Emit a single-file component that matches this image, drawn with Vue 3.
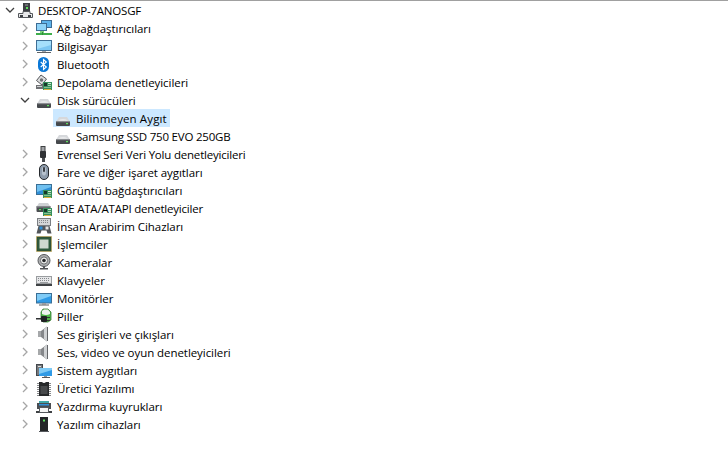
<script setup>
const disk = '<path d="M1.5 11 L4 7 H12 L14.5 11Z" fill="#d6d8db"/><path d="M3 10.5 Q8 8 13 10.5Z" fill="#eff0f1"/><rect x="1" y="11" width="14" height="5" rx="1" fill="#45484c"/><rect x="1" y="11" width="14" height="1.2" fill="#8a8d91"/><rect x="11" y="13" width="2" height="1.2" fill="#5ee05e"/>'
const board = '<rect x="7" y="8" width="9" height="8" fill="#37905c"/><rect x="8" y="9" width="3" height="3" fill="#17382a"/><rect x="12" y="9" width="3" height="1" fill="#cfe6d3"/><rect x="12" y="11" width="3" height="1" fill="#a9d2b0"/><rect x="8" y="13" width="7" height="1" fill="#86c091"/><rect x="8" y="15" width="7" height="1" fill="#d9b23c"/>'
const speaker = '<rect x="2" y="5" width="3" height="6" fill="#a6a8aa"/><path d="M5 5 L11 0.5 V15.5 L5 11Z" fill="#85878a"/><path d="M8 3 L11 0.5 V15.5 L8 13Z" fill="#cfd1d3"/><rect x="11" y="1" width="1" height="14" fill="#636568"/>'

const icons = {
  root: '<rect x="5" y="1" width="7" height="8" fill="#3c3f43"/><rect x="7" y="2.5" width="3" height="1" fill="#9a9da0"/><rect x="8" y="5" width="2" height="2" fill="#5ee05e"/><path d="M0.5 11.5 H5 V9.5 H12 V11.5 H14.5 V15.5 H0.5Z" fill="#e8e9ea" stroke="#55585c"/><rect x="2" y="13" width="3" height="2" fill="#3c3f43"/><rect x="10" y="13" width="3" height="2" fill="#3c3f43"/>',
  network: '<rect x="5.5" y="0.5" width="10" height="7" fill="#5fb4ec" stroke="#3d6c94"/><rect x="0.5" y="3.5" width="10" height="7" fill="#8fd3f8" stroke="#3d6c94"/><rect x="4" y="11" width="4" height="2" fill="#7bd07b"/><rect x="0" y="13" width="16" height="2" fill="#3fae4b"/><rect x="6" y="12" width="1" height="3" fill="#2f8a3a"/>',
  computer: '<rect x="0.5" y="2.5" width="15" height="10" fill="#7cc6f2" stroke="#3f6f96"/><path d="M1 3 H15 V7 L1 11Z" fill="#a5dffb"/><rect x="6" y="13" width="4" height="1" fill="#a6a9ac"/><rect x="1" y="14" width="14" height="1" fill="#5f6266"/>',
  bluetooth: '<rect x="2" y="1" width="11" height="15" rx="5.5" fill="#0a78d7"/><path d="M4.7 6 L10.3 11 L7.5 13.5 V3.5 L10.3 6 L4.7 11" fill="none" stroke="#fff" stroke-width="1.1"/>',
  storage: '<path d="M0.5 6.5 L5 1 L10.5 5 L6 11Z" fill="#dcddde" stroke="#55575a"/><circle cx="5.5" cy="6" r="1.7" fill="#6f7174"/><rect x="0" y="11" width="8" height="4" fill="#6f7174"/><rect x="1" y="12" width="5" height="1" fill="#cfd1d3"/>' + board,
  disk,
  usb: '<rect x="5" y="0.5" width="4" height="5" fill="#a0a2a5" stroke="#3f4143"/><rect x="4" y="5" width="6" height="7" rx="1" fill="#303235"/><rect x="6" y="12" width="3" height="5" fill="#4a4d50"/>',
  mouse: '<rect x="3.5" y="0.5" width="9" height="15" rx="4.5" fill="#8e9cac" stroke="#25282c"/><path d="M6 4 Q8 2 10 4 V10 Q8 13 6 10Z" fill="#b7c2ce"/><rect x="7" y="3" width="2" height="5" rx="1" fill="#383c42"/>',
  display: '<rect x="0.5" y="2.5" width="15" height="10" fill="#2f8fd8" stroke="#3a6f96"/><path d="M1 3 H15 V5 L1 10Z" fill="#6fc0f0"/>' + board,
  ide: '<path d="M1 6 L3 3 H12 L14 6Z" fill="#cfd1d4"/><rect x="0.5" y="6" width="14" height="6" rx="1" fill="#4a4d51"/><rect x="0.5" y="6" width="14" height="1.5" fill="#85888c"/><rect x="3" y="9" width="2" height="1.2" fill="#5ee05e"/>' + board,
  hid: '<rect x="1.5" y="0.5" width="13" height="7" fill="#d4d6d8" stroke="#7b7e82"/><path d="M3 2.5H13M3 4.5H13" stroke="#85888c" stroke-dasharray="1 1"/><path d="M0.5 15.5 L2.5 8 H13.5 L15.5 15.5 H11.5 L10.5 12.5 H5.5 L4.5 15.5Z" fill="#53565a"/><rect x="3.5" y="8.5" width="3" height="3" fill="#2f8fd8"/><rect x="9.5" y="8.5" width="3" height="3" fill="#e3e4e5"/>',
  cpu: '<rect x="0.5" y="0.5" width="15" height="15" fill="#2f4a33" stroke="#c8a94a" stroke-dasharray="1 1"/><rect x="1.5" y="1.5" width="13" height="13" fill="#2f5a3d"/><rect x="3.5" y="3.5" width="9" height="9" fill="#cfd8cf"/>',
  camera: '<circle cx="8" cy="6.5" r="6" fill="#aeb0b2" stroke="#55575a"/><circle cx="8" cy="6.5" r="3.6" fill="#eceded" stroke="#6d6f71"/><circle cx="8" cy="6.5" r="1.8" fill="#26282a"/><rect x="7" y="12" width="2" height="2" fill="#55585c"/><rect x="4" y="14" width="8" height="1.5" fill="#4f5154"/>',
  keyboard: '<rect x="0.5" y="4.5" width="15" height="7" fill="#e6e7e9" stroke="#9a9da0"/><path d="M2 6.5H14M2 8.5H14" stroke="#85888c" stroke-dasharray="1 1"/><rect x="4" y="10" width="8" height="1" fill="#9a9da0"/><rect x="0" y="12" width="16" height="2" fill="#3f4245"/>',
  monitor: '<rect x="0.5" y="3.5" width="15" height="9.5" fill="#2f9ae6" stroke="#3a6f96"/><path d="M1 4 H15 V6 L1 11Z" fill="#7fcbf6"/><rect x="6" y="13" width="4" height="1.5" fill="#9a9da0"/><rect x="3" y="14.5" width="10" height="1" fill="#55585c"/>',
  battery: '<path d="M7 1 H12 L15 4 V12 L12 14 H7 L5 12 V4Z" fill="#4fb648" stroke="#3a7a38" stroke-width="0.8"/><path d="M6 3 L8 1.5 H12 L14 4 V6 Q10 8 6 6Z" fill="#eef3ee"/><rect x="0" y="10" width="6" height="1.5" fill="#2f3133"/><rect x="5" y="8" width="6" height="6" rx="1" fill="#1f2123"/><rect x="11" y="9" width="3" height="1" fill="#333"/><rect x="11" y="12" width="3" height="1" fill="#333"/>',
  speaker,
  system: '<rect x="0.5" y="2.5" width="6" height="11" fill="#76797d" stroke="#45484c"/><rect x="2" y="4" width="3" height="1" fill="#e0e0e0"/><rect x="3" y="6" width="13" height="8" fill="#2f9ae6"/><path d="M3 6 H16 V8 L3 12Z" fill="#7fcbf6"/><rect x="8" y="14" width="3" height="1" fill="#8f9295"/><rect x="6" y="15" width="8" height="1" fill="#55585c"/>',
  firmware: '<path d="M3 2 H6 Q8 4 10 2 H13 V16 H3Z" fill="#26282a"/><rect x="4.5" y="6" width="7" height="8" fill="#47494b"/><path d="M2 3V16M14 3V16" stroke="#6a6c6e" stroke-width="1.6" stroke-dasharray="1 1"/>',
  printer: '<rect x="3" y="3" width="10" height="2" fill="#3fa6a6"/><rect x="1" y="5" width="14" height="6" fill="#4a4d51"/><rect x="3" y="6" width="10" height="1.5" fill="#2f8fd8"/><rect x="3.5" y="9.5" width="9" height="5" fill="#f5f5f5" stroke="#55585c"/><rect x="0" y="13" width="3" height="2" fill="#3f4245"/><rect x="13" y="13" width="3" height="2" fill="#3f4245"/>',
  software: '<rect x="4" y="1" width="8" height="14" fill="#232527"/><rect x="7" y="3.5" width="2" height="2" fill="#5ee05e"/><rect x="3" y="15" width="10" height="1" fill="#55585c"/>'
}

const rows = [
  { name: 'DESKTOP-7ANOSGF', icon: 'root', level: 0, open: true, tight: true },
  { name: 'Ağ bağdaştırıcıları', icon: 'network', level: 1 },
  { name: 'Bilgisayar', icon: 'computer', level: 1 },
  { name: 'Bluetooth', icon: 'bluetooth', level: 1 },
  { name: 'Depolama denetleyicileri', icon: 'storage', level: 1 },
  { name: 'Disk sürücüleri', icon: 'disk', level: 1, open: true },
  { name: 'Bilinmeyen Aygıt', icon: 'disk', level: 2, selected: true },
  { name: 'Samsung SSD 750 EVO 250GB', icon: 'disk', level: 2, tight: true },
  { name: 'Evrensel Seri Veri Yolu denetleyicileri', icon: 'usb', level: 1, tight: true },
  { name: 'Fare ve diğer işaret aygıtları', icon: 'mouse', level: 1 },
  { name: 'Görüntü bağdaştırıcıları', icon: 'display', level: 1 },
  { name: 'IDE ATA/ATAPI denetleyiciler', icon: 'ide', level: 1, tight: true },
  { name: 'İnsan Arabirim Cihazları', icon: 'hid', level: 1 },
  { name: 'İşlemciler', icon: 'cpu', level: 1 },
  { name: 'Kameralar', icon: 'camera', level: 1 },
  { name: 'Klavyeler', icon: 'keyboard', level: 1 },
  { name: 'Monitörler', icon: 'monitor', level: 1 },
  { name: 'Piller', icon: 'battery', level: 1 },
  { name: 'Ses girişleri ve çıkışları', icon: 'speaker', level: 1 },
  { name: 'Ses, video ve oyun denetleyicileri', icon: 'speaker', level: 1 },
  { name: 'Sistem aygıtları', icon: 'system', level: 1 },
  { name: 'Üretici Yazılımı', icon: 'firmware', level: 1 },
  { name: 'Yazdırma kuyrukları', icon: 'printer', level: 1 },
  { name: 'Yazılım cihazları', icon: 'software', level: 1 }
]
</script>

<template>
  <div class="tree">
    <div v-for="row in rows" :key="row.name" class="row" :class="`level-${row.level}`">
      <span class="arrow">
        <svg v-if="row.level < 2" width="10" height="10" viewBox="0 0 10 10">
          <path v-if="row.open" d="M1 3 L5 7 L9 3" fill="none" stroke="#404040" stroke-width="1.3" />
          <path v-else d="M3 1 L7 5 L3 9" fill="none" stroke="#a6a6a6" stroke-width="1.3" />
        </svg>
      </span>
      <div class="item" :class="{ selected: row.selected }">
        <svg class="icon" width="16" height="16" viewBox="0 0 16 16" v-html="icons[row.icon]"></svg>
        <span class="name" :class="{ tight: row.tight }">{{ row.name }}</span>
      </div>
    </div>
  </div>
</template>

<style>
html, body {
  background: #fff;
}
</style>

<style scoped>
.tree {
  width: 728px;
  height: 459px;
  box-sizing: border-box;
  border-top: 1px solid #a0a0a0;
  font-family: "Open Sans", "Noto Sans", sans-serif;
  font-size: 11.5px;
  letter-spacing: -0.06px;
  color: #000;
  overflow: hidden;
}
.row {
  display: flex;
  align-items: center;
  height: 18px;
}
.arrow {
  display: flex;
  justify-content: center;
  width: 10px;
  flex: none;
}
.level-0 { padding-left: 5px; }
.level-1 { padding-left: 20px; }
.level-2 { padding-left: 43px; }
.item {
  display: flex;
  align-items: center;
  height: 18px;
  padding: 0 3px;
}
.level-0 .item { padding-left: 3px; }
.level-1 .item { padding-left: 6px; }
.level-2 .item { padding-left: 2px; }
.selected {
  background: #cce8ff;
}
.selected .name {
  letter-spacing: 0.12px;
}
.icon {
  flex: none;
}
.name {
  margin-left: 4px;
  white-space: nowrap;
}
.tight {
  letter-spacing: -0.2px;
}
.level-1 .name { margin-left: 5px; }
.level-2 .name { margin-left: 5px; }
</style>
